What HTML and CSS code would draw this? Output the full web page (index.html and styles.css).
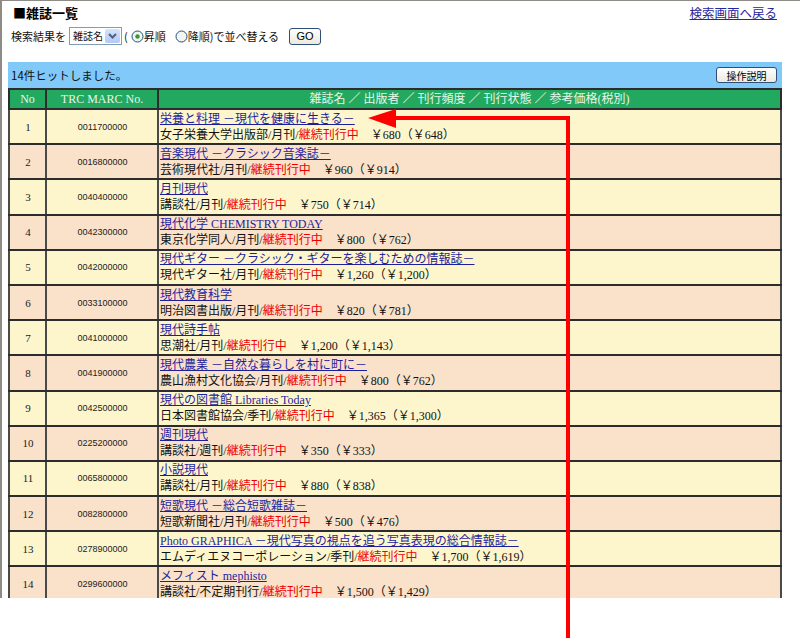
FILE: index.html
```html
<!DOCTYPE html>
<html lang="ja">
<head>
<meta charset="utf-8">
<title>雑誌一覧</title>
<link rel="stylesheet" href="styles.css">
</head>
<body>
<div class="frame">
  <div class="top">
    <h1 class="title">■雑誌一覧</h1>
    <a class="back" href="#">検索画面へ戻る</a>
  </div>
  <div class="sort">
    <span>検索結果を</span>
    <span class="select"><span class="select-text">雑誌名</span><span class="select-btn"><svg width="9" height="6" viewBox="0 0 9 6"><path d="M1 1 L4.5 4.5 L8 1" fill="none" stroke="#4d6185" stroke-width="2"/></svg></span></span>
    <span class="paren">(</span>
    <span class="radio"><svg width="13" height="13" viewBox="0 0 13 13"><circle cx="6.5" cy="6.5" r="5.5" fill="#f4f4f0" stroke="#1c5180"/><circle cx="6.5" cy="6.5" r="2.2" fill="#2aa12a"/></svg></span>
    <span class="label">昇順</span>
    <span class="radio r2"><svg width="13" height="13" viewBox="0 0 13 13"><circle cx="6.5" cy="6.5" r="5.5" fill="#f4f4f0" stroke="#1c5180"/></svg></span>
    <span class="label">降順)で並べ替える</span>
    <span class="btn go">GO</span>
  </div>
  <div class="results">
    <div class="hitbar">
      <span>14件ヒットしました。</span>
      <span class="btn help">操作説明</span>
    </div>
    <table class="list">
      <thead>
        <tr><th class="c-no">No</th><th class="c-marc">TRC MARC No.</th><th class="c-main">雑誌名 ／ 出版者 ／ 刊行頻度 ／ 刊行状態 ／ 参考価格(税別)</th></tr>
      </thead>
      <tbody>
        <tr class="odd"><td class="no">1</td><td class="marc">0011700000</td><td class="main"><a href="#">栄養と料理 －現代を健康に生きる－</a><br>女子栄養大学出版部/月刊/<span class="st">継続刊行中</span>　￥680（￥648）</td></tr>
        <tr class="even"><td class="no">2</td><td class="marc">0016800000</td><td class="main"><a href="#">音楽現代 －クラシック音楽誌－</a><br>芸術現代社/月刊/<span class="st">継続刊行中</span>　￥960（￥914）</td></tr>
        <tr class="odd"><td class="no">3</td><td class="marc">0040400000</td><td class="main"><a href="#">月刊現代</a><br>講談社/月刊/<span class="st">継続刊行中</span>　￥750（￥714）</td></tr>
        <tr class="even"><td class="no">4</td><td class="marc">0042300000</td><td class="main"><a href="#">現代化学 CHEMISTRY TODAY</a><br>東京化学同人/月刊/<span class="st">継続刊行中</span>　￥800（￥762）</td></tr>
        <tr class="odd"><td class="no">5</td><td class="marc">0042000000</td><td class="main"><a href="#">現代ギター －クラシック・ギターを楽しむための情報誌－</a><br>現代ギター社/月刊/<span class="st">継続刊行中</span>　￥1,260（￥1,200）</td></tr>
        <tr class="even"><td class="no">6</td><td class="marc">0033100000</td><td class="main"><a href="#">現代教育科学</a><br>明治図書出版/月刊/<span class="st">継続刊行中</span>　￥820（￥781）</td></tr>
        <tr class="odd"><td class="no">7</td><td class="marc">0041000000</td><td class="main"><a href="#">現代詩手帖</a><br>思潮社/月刊/<span class="st">継続刊行中</span>　￥1,200（￥1,143）</td></tr>
        <tr class="even"><td class="no">8</td><td class="marc">0041900000</td><td class="main"><a href="#">現代農業 －自然な暮らしを村に町に－</a><br>農山漁村文化協会/月刊/<span class="st">継続刊行中</span>　￥800（￥762）</td></tr>
        <tr class="odd"><td class="no">9</td><td class="marc">0042500000</td><td class="main"><a href="#">現代の図書館 Libraries Today</a><br>日本図書館協会/季刊/<span class="st">継続刊行中</span>　￥1,365（￥1,300）</td></tr>
        <tr class="even"><td class="no">10</td><td class="marc">0225200000</td><td class="main"><a href="#">週刊現代</a><br>講談社/週刊/<span class="st">継続刊行中</span>　￥350（￥333）</td></tr>
        <tr class="odd"><td class="no">11</td><td class="marc">0065800000</td><td class="main"><a href="#">小説現代</a><br>講談社/月刊/<span class="st">継続刊行中</span>　￥880（￥838）</td></tr>
        <tr class="even"><td class="no">12</td><td class="marc">0082800000</td><td class="main"><a href="#">短歌現代 －総合短歌雑誌－</a><br>短歌新聞社/月刊/<span class="st">継続刊行中</span>　￥500（￥476）</td></tr>
        <tr class="odd"><td class="no">13</td><td class="marc">0278900000</td><td class="main"><a href="#">Photo GRAPHICA －現代写真の視点を追う写真表現の総合情報誌－</a><br>エムディエヌコーポレーション/季刊/<span class="st">継続刊行中</span>　￥1,700（￥1,619）</td></tr>
        <tr class="even"><td class="no">14</td><td class="marc">0299600000</td><td class="main"><a href="#">メフィスト mephisto</a><br>講談社/不定期刊行/<span class="st">継続刊行中</span>　￥1,500（￥1,429）</td></tr>
      </tbody>
    </table>
  </div>
</div>
<svg class="arrow" width="800" height="638" viewBox="0 0 800 638">
  <polyline points="394,118 568,118 568,638" fill="none" stroke="#ff0000" stroke-width="4"/>
  <polygon points="368,118 396,109 396,128" fill="#ff0000"/>
</svg>
</body>
</html>
```
FILE: styles.css
```css
html, body {
  margin: 0;
  padding: 0;
  background: #ffffff;
}
body {
  position: relative;
  width: 800px;
  height: 638px;
  overflow: hidden;
  font-family: "Noto Sans CJK JP", sans-serif;
  color: #000;
}
.frame {
  height: 597px;
  overflow: hidden;
  border-top: 1px solid #8e8a86;
  border-left: 2px solid #8e8a86;
}
.top {
  display: flex;
  justify-content: space-between;
  align-items: flex-start;
  padding: 4px 23px 0 11px;
}
.title {
  margin: 0;
  font-size: 13px;
  font-weight: bold;
  line-height: 16px;
}
.back {
  font-size: 12.5px;
  line-height: 16px;
  color: #27279c;
  text-decoration: underline;
}
.sort {
  display: flex;
  align-items: center;
  margin-top: 6px;
  padding-left: 9px;
  height: 18px;
  font-size: 11px;
  line-height: 16px;
  color: #111;
  white-space: nowrap;
}
.select {
  display: flex;
  margin-left: 3px;
  width: 51px;
  height: 16px;
  border: 1px solid #7f9db9;
  background: #fff;
}
.select-text {
  flex: 1;
  padding-left: 3px;
  font-size: 10px;
  line-height: 16px;
  white-space: nowrap;
}
.select-btn {
  display: flex;
  align-items: center;
  justify-content: center;
  width: 15px;
  margin: 1px;
  border-radius: 2px;
  background: linear-gradient(#d6e3fd, #b4c8f5);
}
.paren {
  margin-left: 2px;
}
.radio {
  display: flex;
  margin-left: 3px;
}
.radio.r2 {
  margin-left: 9px;
}
.btn {
  display: inline-flex;
  align-items: center;
  justify-content: center;
  height: 14px;
  border: 1px solid #2f4f78;
  border-radius: 3px;
  background: linear-gradient(#ffffff, #ece9e0);
  font-family: "Liberation Sans", "Noto Sans CJK JP", sans-serif;
  font-size: 11px;
  color: #000;
}
.go {
  width: 30px;
  height: 15px;
  margin-left: 10px;
}
.help {
  width: 59px;
  font-size: 10px;
}
.results {
  margin: 17px 0 0 6px;
  width: 774px;
}
.hitbar {
  display: flex;
  justify-content: space-between;
  align-items: center;
  height: 26px;
  padding: 0 5px 0 3px;
  background: #80c9f9;
  font-size: 11.5px;
  color: #111;
}
.list {
  width: 774px;
  border-collapse: collapse;
  table-layout: fixed;
  font-family: "Liberation Serif", "Noto Sans CJK JP", serif;
}
.list th {
  height: 18px;
  padding: 0;
  background: #22a95f;
  color: #e8f6ea;
  font-weight: normal;
  font-size: 12px;
  line-height: 16px;
  border: 2px solid #2c2c2c;
  border-bottom-width: 1px;
}
.c-no { width: 35px; }
.c-marc { width: 110px; }
.list td {
  height: 33.2px;
  padding: 0 0 0 1px;
  border: 2px solid #2c2c2c;
  border-left-color: #4a4a4a;
  border-right-color: #4a4a4a;
  vertical-align: middle;
}
.list tr.odd td { background: #fdf6cd; }
.list tr.even td { background: #fae1c9; }
.list td.no {
  text-align: center;
  font-size: 11px;
  color: #222;
}
.list td.marc {
  text-align: center;
  font-family: "Liberation Sans", sans-serif;
  font-size: 9px;
  color: #222;
}
.list td.main {
  font-size: 12px;
  line-height: 16px;
  color: #111;
  white-space: nowrap;
}
.list td.main a {
  color: #1f1f9c;
  text-decoration: underline;
}
.st {
  color: #ee0000;
}
.arrow {
  position: absolute;
  left: 0;
  top: 0;
  pointer-events: none;
}
```
